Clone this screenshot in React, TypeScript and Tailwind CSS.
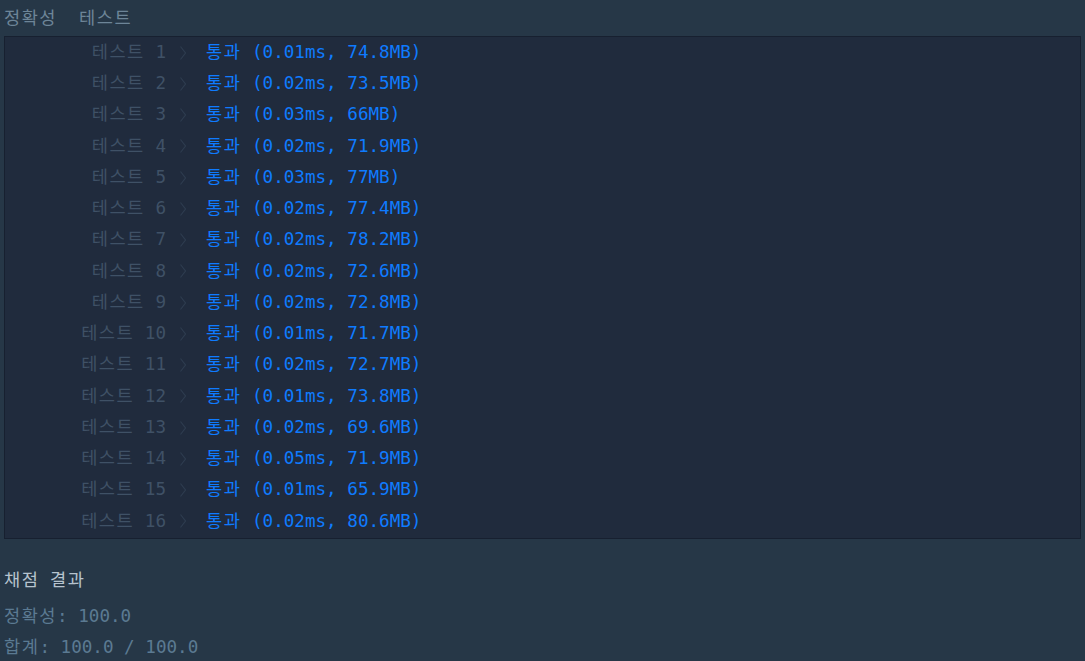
import React from "react";

const rows: [string, string][] = [
  ["1", "(0.01ms, 74.8MB)"],
  ["2", "(0.02ms, 73.5MB)"],
  ["3", "(0.03ms, 66MB)"],
  ["4", "(0.02ms, 71.9MB)"],
  ["5", "(0.03ms, 77MB)"],
  ["6", "(0.02ms, 77.4MB)"],
  ["7", "(0.02ms, 78.2MB)"],
  ["8", "(0.02ms, 72.6MB)"],
  ["9", "(0.02ms, 72.8MB)"],
  ["10", "(0.01ms, 71.7MB)"],
  ["11", "(0.02ms, 72.7MB)"],
  ["12", "(0.01ms, 73.8MB)"],
  ["13", "(0.02ms, 69.6MB)"],
  ["14", "(0.05ms, 71.9MB)"],
  ["15", "(0.01ms, 65.9MB)"],
  ["16", "(0.02ms, 80.6MB)"],
];

function K({ children }: { children: React.ReactNode }) {
  return <span className="tracking-[1.5px]">{children}</span>;
}

export default function App() {
  return (
    <div
      className="w-[1085px] h-[661px] bg-[#263747] overflow-hidden text-[17.6px] leading-none"
      style={{ fontFamily: '"DejaVu Sans Mono", "Noto Sans CJK KR", monospace' }}
    >
      <div className="h-[36px] flex items-center pl-[4px] pt-[1px] text-[#6d8598]">
        <K>정확성</K>
        <span className="ml-[22px]">
          <K>테스트</K>
        </span>
      </div>
      <div className="mx-[4px] border border-[#172030] bg-[#202b3d] pb-[1px]">
        {rows.map(([n, r]) => (
          <div key={n} className="flex items-center h-[31.25px]">
            <span className="w-[161px] text-right text-[#3f5166] whitespace-pre">
              <K>테스트</K>
              {` ${n}`}
            </span>
            <svg width="8" height="16" viewBox="0 0 8 16" className="ml-[13px]" fill="none">
              <path d="M1.5 1.5 L6.5 8 L1.5 14.5" stroke="#2e3c4f" strokeWidth="1.2" />
            </svg>
            <span className="ml-[19px] text-[#0f7bff] whitespace-pre">
              <K>통과</K>
              {` ${r}`}
            </span>
          </div>
        ))}
      </div>
      <div className="pl-[4px] pt-[32px]">
        <div className="h-[20px] flex items-center text-[#b6c3ce]">
          <span className="whitespace-pre">
            <K>채점</K>
            {" "}
            <K>결과</K>
          </span>
        </div>
        <div className="h-[31px] mt-[10px] flex items-center text-[#5b7a92]">
          <span className="whitespace-pre">
            <K>정확성</K>
            {": 100.0"}
          </span>
        </div>
        <div className="h-[31px] flex items-center text-[#5b7a92]">
          <span className="whitespace-pre">
            <K>합계</K>
            {": 100.0 / 100.0"}
          </span>
        </div>
      </div>
    </div>
  );
}
